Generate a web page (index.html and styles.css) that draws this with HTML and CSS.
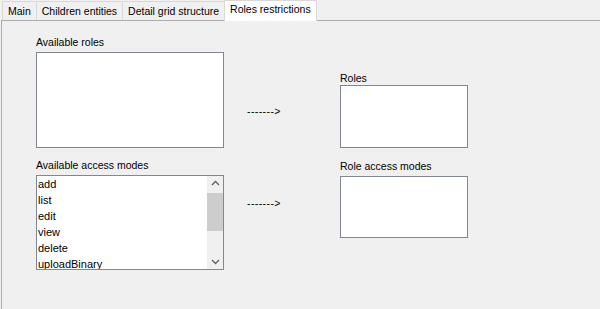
FILE: index.html
```html
<!DOCTYPE html>
<html lang="en">

<head>
    <meta charset="UTF-8">
    <title>Roles restrictions</title>
    <link rel="stylesheet" href="styles.css">
</head>

<body>

    <div class="tabs">
        <div class="tab">Main</div>
        <div class="tab">Children entities</div>
        <div class="tab">Detail grid structure</div>
        <div class="tab active">Roles restrictions</div>
    </div>

    <section class="panel">

        <div class="grid">

            <div class="cell">
                <label class="lbl">Available roles</label>
                <div class="box big"></div>
            </div>

            <div class="arrow first">-------&gt;</div>

            <div class="cell right">
                <label class="lbl">Roles</label>
                <div class="box small"></div>
            </div>

            <div class="cell">
                <label class="lbl">Available access modes</label>
                <div class="box big list">
                    <ul class="items">
                        <li>add</li>
                        <li>list</li>
                        <li>edit</li>
                        <li>view</li>
                        <li>delete</li>
                        <li>uploadBinary</li>
                    </ul>
                    <div class="scroll">
                        <svg class="chev" width="15" height="15" viewBox="0 0 15 15">
                            <path d="M4 9 L7.5 5.5 L11 9" fill="none" stroke="#606060" stroke-width="1.3" />
                        </svg>
                        <div class="thumb"></div>
                        <div class="track"></div>
                        <svg class="chev" width="15" height="15" viewBox="0 0 15 15">
                            <path d="M4 6 L7.5 9.5 L11 6" fill="none" stroke="#606060" stroke-width="1.3" />
                        </svg>
                    </div>
                </div>
            </div>

            <div class="arrow second">-------&gt;</div>

            <div class="cell top">
                <label class="lbl">Role access modes</label>
                <div class="box small low"></div>
            </div>

        </div>

    </section>

</body>

</html>
```

FILE: styles.css
```css
body {
    margin: 0;
    background-color: #f0f0f0;
    font-family: "Liberation Sans", Arial, sans-serif;
    font-size: 10.5px;
    color: #000;
    height: 309px;
    overflow: hidden;
}

.tabs {
    display: flex;
    align-items: flex-end;
    height: 20px;
    padding-left: 2px;
}

.tab {
    height: 18px;
    line-height: 18px;
    padding: 0 5px;
    border: 1px solid #d9d9d9;
    border-bottom: none;
    border-right: none;
    background-color: #f0f0f0;
}

.tab.active {
    height: 20px;
    line-height: 17px;
    padding: 0 5px;
    margin-bottom: -1px;
    background-color: #fff;
    border-right: 1px solid #d9d9d9;
    position: relative;
}

.panel {
    height: 289px;
    border-top: 1px solid #adadad;
    border-left: 1px solid #adadad;
    margin-left: 1px;
    box-sizing: border-box;
}

.grid {
    display: grid;
    grid-template-columns: 188px 116px 128px;
    grid-template-rows: 113px 112px;
    row-gap: 10px;
    padding: 14px 0 0 34px;
}

.cell {
    display: flex;
    flex-direction: column;
}

.right {
    justify-content: flex-end;
}

.top {
    padding-top: 1px;
}

.lbl {
    height: 14px;
    line-height: 14px;
    margin-bottom: 3px;
}

.right .lbl {
    margin-bottom: 0;
}

.box {
    background-color: #fff;
    border: 1px solid #828790;
    box-sizing: border-box;
}

.big {
    height: 96px;
}

.small {
    height: 63px;
}

.small.low {
    height: 62px;
}

.arrow {
    padding-left: 23px;
    line-height: 14px;
    letter-spacing: 0.4px;
}

.first {
    padding-top: 69px;
}

.second {
    padding-top: 38px;
}

.list {
    display: flex;
    height: 95px;
}

.items {
    flex: 1;
    list-style: none;
    margin: 0;
    padding: 0 0 0 1px;
    overflow: hidden;
}

.items li {
    height: 16px;
    line-height: 16px;
    font-size: 11px;
}

.scroll {
    width: 16px;
    display: flex;
    flex-direction: column;
    background-color: #f0f0f0;
}

.chev {
    display: block;
    margin-left: 1px;
}

.thumb {
    height: 38px;
    background-color: #cdcdcd;
    margin-top: 2px;
}

.track {
    flex: 1;
}
```
